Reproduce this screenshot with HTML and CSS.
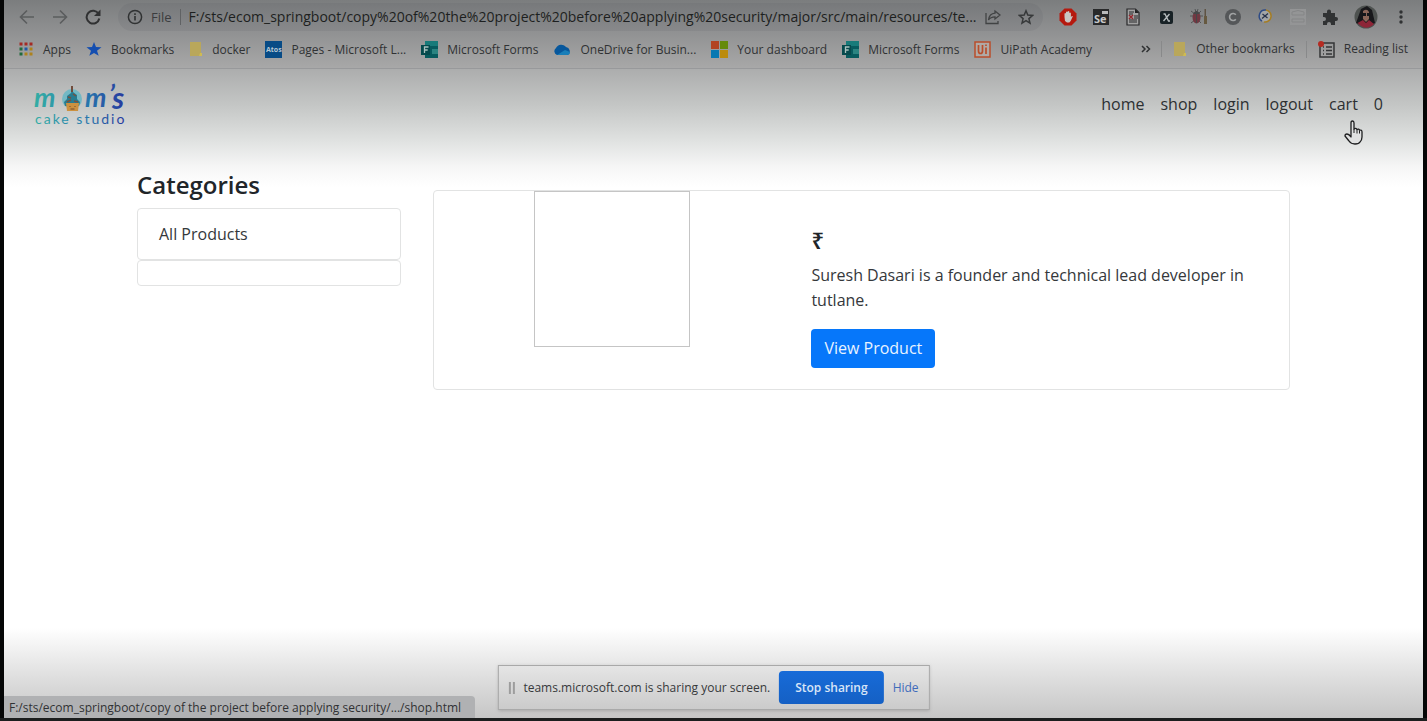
FILE: index.html
```
<!DOCTYPE html>
<html lang="en">
<head>
<meta charset="utf-8">
<title>Mom's Cake Studio - Shop</title>
<link rel="stylesheet" href="styles.css">
</head>
<body>
<div class="screen">
  <header class="browser">
    <div class="toolbar">
      <button class="tool" aria-label="Back"><svg width="16" height="16" viewBox="0 0 16 16" fill="none" stroke="#5b5d5e" stroke-width="1.600"><path d="M15 8H2M8 1.500 1.500 8 8 14.500"/></svg></button>
      <button class="tool" aria-label="Forward"><svg width="16" height="16" viewBox="0 0 16 16" fill="none" stroke="#5b5d5e" stroke-width="1.600"><path d="M1 8h13M8 1.500 14.500 8 8 14.500"/></svg></button>
      <button class="tool" aria-label="Reload"><svg width="16" height="16" viewBox="0 0 16 16"><path d="M13.600 5A6.400 6.400 0 1 0 14.300 9.500" fill="none" stroke="#303132" stroke-width="2"/><path d="M15.500.5V7H9z" fill="#303132"/></svg></button>
      <div class="address">
        <svg width="16" height="16" viewBox="0 0 16 16"><circle cx="8" cy="8" r="6.600" fill="none" stroke="#303233" stroke-width="1.500"/><path d="M8 7v4.500M8 4.200v1.700" stroke="#303233" stroke-width="1.600"/></svg>
        <span class="scheme">File</span>
        <span class="url">F:/sts/ecom_springboot/copy%20of%20the%20project%20before%20applying%20security/major/src/main/resources/te...</span>
        <button class="tool" aria-label="Share"><svg width="16" height="16" viewBox="0 0 16 16" fill="none" stroke="#414344" stroke-width="1.300"><path d="M1 4v10.500h12V12M10 2l5 4-5 4V7.800C7 7.800 5 8.500 3.500 11 4 7 6.500 4.500 10 4.200z"/></svg></button>
        <button class="tool star" aria-label="Bookmark this page"><svg width="16" height="16" viewBox="0 0 16 16" fill="none" stroke="#37393a" stroke-width="1.500"><path d="m8 1.800 1.800 4.300 4.700.4-3.600 3.100 1.100 4.600L8 11.700l-4 2.500 1.100-4.600-3.600-3.100 4.700-.4z"/></svg></button>
      </div>
      <div class="extensions">
        <button class="tool" aria-label="Ad blocker"><svg width="18" height="18" viewBox="0 0 18 18"><path d="M5.500.5h7l5 5v7l-5 5h-7l-5-5v-7z" fill="#b5190f"/><path d="M5.500 9V5.500q.8-1 1.500 0V4q.8-1 1.600 0v-.5q.9-1 1.700 0V5q1-1 1.600.2V9l1-1q1.400-.3.600 1l-1.800 4-1.400 1.500H8L6 13z" fill="#c9c5c3"/></svg></button>
        <button class="tool" aria-label="Selenium"><svg width="18" height="18" viewBox="0 0 18 18"><path d="M1 1h16v16H1z" fill="#28292a"/><path d="M10 3h6v3h-6z" fill="#b9babb"/><text x="2" y="15" class="se-text">Se</text></svg></button>
        <button class="tool" aria-label="Document"><svg width="18" height="18" viewBox="0 0 18 18"><path d="M3 1h8.500L15 4.500V17H3z" fill="#a2a2a2" stroke="#28292a" stroke-width="1.200"/><path d="M11 1v4h4z" fill="#202122"/><path d="M5 4h5M5 6h4M10 8h4M10 10h4M5 12h8M5 14h8" stroke="#28292a"/><path d="m5 7 4 4M9 7l-4 4" stroke="#96272d" stroke-width="1.400"/></svg></button>
        <button class="tool" aria-label="XPath"><svg width="18" height="18" viewBox="0 0 18 18"><rect x="3" y="3" width="13" height="13" rx="2" fill="#182226"/><path d="M6.500 6h1.500l3.500 7H13M12.500 6 6.500 13" fill="none" stroke="#b7bdbf" stroke-width="1.300"/></svg></button>
        <button class="tool" aria-label="Bug reporter"><svg width="20" height="18" viewBox="0 0 20 18"><path d="M2 3l4 3M1 8h4M2 15l4-3M12 3 9 6M14 8h-4M12 15l-3-3M6 1l1 3M9 1 8 4" stroke="#525455"/><ellipse cx="7.500" cy="9.500" rx="4" ry="6" fill="#713842"/><path d="M4 6q3.500-6 7 0z" fill="#454849"/><path d="M7.500 5v10" stroke="#454849"/><path d="M15.500 1h1.500v8h-1.500z" fill="#5e5344"/><path d="M15 8h3v8h-3z" fill="#665940"/></svg></button>
        <button class="tool" aria-label="Colour checker"><svg width="18" height="18" viewBox="0 0 18 18"><circle cx="9" cy="9" r="8" fill="#555759"/><path d="M11.800 6.800a3.500 3.500 0 1 0 0 4.400" fill="none" stroke="#a1a3a4" stroke-width="1.600"/></svg></button>
        <button class="tool" aria-label="Page tester"><svg width="18" height="18" viewBox="0 0 18 18"><circle cx="9" cy="8" r="6" fill="#a4a6a7"/><path d="M10 2a6 6 0 0 0-4 11" fill="none" stroke="#2e4b86" stroke-width="1.500"/><path d="M10 2a6 6 0 0 1-2 12" fill="none" stroke="#a67d22" stroke-width="1.500"/><path d="m6.500 6 5 4M12 5.500 6 10.500" stroke="#29334c" stroke-width="1.300"/></svg></button>
        <button class="tool" aria-label="Disabled extension"><svg width="18" height="18" viewBox="0 0 18 18"><path d="M1 1h16v16H1z" fill="#949596"/><path d="M3 4q6-3 12 0v3H3zM3 11h12v3H3z" fill="none" stroke="#858687"/></svg></button>
        <button class="tool" aria-label="Extensions"><svg width="18" height="18" viewBox="0 0 18 18"><path d="M2 5h4V3.500a2 2 0 0 1 4 0V5h4v4h1a2 2 0 0 1 0 4h-1v4h-4v-1a2 2 0 0 0-4 0v1H2v-4h1a2 2 0 0 0 0-4H2z" fill="#303233"/></svg></button>
        <button class="tool" aria-label="Profile"><svg width="24" height="24" viewBox="0 0 24 24"><circle cx="12" cy="12" r="11.500" fill="#4e5250"/><path d="M2 18 7 4l6-3 5 4 3 13-8 4z" fill="#18181b"/><path d="M9 6q4-3 6 1v7l-3 3-3-3z" fill="#8b6659"/><path d="M8 8h4v3H8zM13 8h3v3h-3z" fill="#15171b"/><path d="M3.500 18 9 15l3 3 3-3 5 4q-8 8-16.500-1z" fill="#8d2537"/></svg></button>
        <button class="tool" aria-label="Menu"><svg width="18" height="18" viewBox="0 0 18 18" fill="#303233"><circle cx="9" cy="4" r="1.700"/><circle cx="9" cy="9" r="1.700"/><circle cx="9" cy="14" r="1.700"/></svg></button>
      </div>
    </div>
    <nav class="bookmarks" aria-label="Bookmarks">
      <a href="#"><svg width="16" height="16" viewBox="0 0 16 16"><path d="M1.500 1.500h3v3h-3zM6.500 1.500h3v3h-3zM11.500 1.500h3v3h-3z" fill="#a42a24"/><path d="M1.500 6.500h3v3h-3zM1.500 11.500h3v3h-3z" fill="#206a3c"/><path d="M6.500 6.500h3v3h-3z" fill="#2159a4"/><path d="M6.500 11.500h3v3h-3zM11.500 6.500h3v3h-3zM11.500 11.500h3v3h-3z" fill="#ad821d"/></svg>Apps</a>
      <a href="#"><svg width="16" height="16" viewBox="0 0 16 16"><path d="m8 1 2 5 5.500.3L11 9.800l1.700 5L8 12l-4.700 2.800 1.700-5L.5 6.300 6 6z" fill="#144eb0"/></svg>Bookmarks</a>
      <a href="#"><svg width="14" height="16" viewBox="0 0 14 16"><path d="M1 1h11v11h1v3H1z" fill="#b9a75b"/><path d="M11 12h2v3h-3z" fill="#cfbb52"/></svg>docker</a>
      <a href="#"><svg width="17" height="17" viewBox="0 0 17 17"><path d="M0 0h17v17H0z" fill="#074b86"/><text x="1" y="11" class="atos-text">Atos</text></svg>Pages - Microsoft L...</a>
      <a href="#"><svg width="17" height="17" viewBox="0 0 17 17"><path d="M4 0h13v17H4z" fill="#075b5e"/><path d="M4 0h13v5H4z" fill="#187b7a"/><path d="M11 8h6v5h-6z" fill="#2a8481"/><path d="M0 4h9v10H0z" fill="#064a4d"/><path d="M3.500 12V6h4M3.500 9h3.200" fill="none" stroke="#a9c2bf" stroke-width="1.300"/></svg>Microsoft Forms</a>
      <a href="#"><svg width="18" height="17" viewBox="0 0 18 17"><path d="M4 14a4 4 0 0 1-1-7 6 6 0 0 1 10-1 4.500 4.500 0 0 1 2 8z" fill="#07579c"/><path d="m4 14 8-5 5 2q0 3-3 3z" fill="#187eb9"/></svg>OneDrive for Busin...</a>
      <a href="#"><svg width="17" height="17" viewBox="0 0 17 17"><path d="M0 0h8v8H0z" fill="#b24422"/><path d="M9 0h8v8H9z" fill="#658a0c"/><path d="M0 9h8v8H0z" fill="#0878b2"/><path d="M9 9h8v8H9z" fill="#bb8b0d"/></svg>Your dashboard</a>
      <a href="#"><svg width="17" height="17" viewBox="0 0 17 17"><path d="M4 0h13v17H4z" fill="#075b5e"/><path d="M4 0h13v5H4z" fill="#187b7a"/><path d="M11 8h6v5h-6z" fill="#2a8481"/><path d="M0 4h9v10H0z" fill="#064a4d"/><path d="M3.500 12V6h4M3.500 9h3.200" fill="none" stroke="#a9c2bf" stroke-width="1.300"/></svg>Microsoft Forms</a>
      <a href="#"><svg width="17" height="17" viewBox="0 0 17 17"><path d="M1 1h15v15H1z" fill="#b0aaa6" stroke="#b94e2b" stroke-width="1.500"/><path d="M4.500 4v6q0 2.500 2 2.500t2-2.500V4M12 6.500V13M12 3.500v1.600" fill="none" stroke="#b94e2b" stroke-width="1.700"/></svg>UiPath Academy</a>
      <button class="tool more" aria-label="More bookmarks"><svg width="10" height="10" viewBox="0 0 10 10" fill="none" stroke="#303233" stroke-width="1.500"><path d="m1 2 3 3-3 3M5.500 2l3 3-3 3"/></svg></button>
      <a href="#" class="divided"><svg width="14" height="16" viewBox="0 0 14 16"><path d="M1 1h11v11h1v3H1z" fill="#b9a75b"/><path d="M11 12h2v3h-3z" fill="#cfbb52"/></svg>Other bookmarks</a>
      <a href="#" class="divided reading"><svg width="17" height="17" viewBox="0 0 17 17"><path d="M2 2h14v14H2z" fill="none" stroke="#343637" stroke-width="1.500"/><path d="M5 6h1M8 6h6M5 9.500h1M8 9.500h6M5 13h1M8 13h6" stroke="#343637" stroke-width="1.300"/><circle cx="3" cy="3" r="3" fill="#b52b22"/></svg>Reading list</a>
    </nav>
  </header>

  <div class="page">
    <nav class="site-nav" aria-label="Main">
      <a href="#" class="brand" aria-label="Mom's cake studio">
        <svg width="104" height="56" viewBox="0 0 104 56">
          <defs>
            <linearGradient id="ink" gradientUnits="userSpaceOnUse" x1="2" y1="0" x2="94" y2="0"><stop offset="0" stop-color="#33aca4"/><stop offset=".5" stop-color="#287fae"/><stop offset="1" stop-color="#26349e"/></linearGradient>
          </defs>
          <circle cx="38" cy="23" r="10" fill="#73b8c4"/>
          <path d="m38 12-1 5-4 3v3l-3 3 1 4h14l1-4-3-3v-4l-4-3z" fill="#267c91"/>
          <path d="M37 10h2v6h-2z" fill="#704c3c"/>
          <path d="m34 21 3 1M39 18l3 2M33 26l4-2M40 25l4 1" stroke="#78513f" stroke-width="1.500"/>
          <path d="M32 27h13l-1 8H33z" fill="#cc913f"/>
          <path d="M36 30v1M41 30v1M36.500 33h4" stroke="#71482f"/>
          <text x="0" y="31" class="logo-script">m</text>
          <text x="51" y="31" class="logo-script">m</text>
          <text x="75" y="28" class="logo-script">’</text>
          <text x="78" y="33" class="logo-script logo-s">s</text>
          <text x="1" y="48" class="logo-sub">cake studio</text>
        </svg>
      </a>
      <div class="links">
        <a href="#">home</a><a href="#">shop</a><a href="#">login</a><a href="#">logout</a><a href="#">cart</a><a href="#">0</a>
      </div>
      <svg class="cursor" width="20" height="26" viewBox="0 0 20 26"><path d="M7 15V3q0-2 1.500-2T10 3v6q2-1.500 3 .5 2-1 2.500.7 2.500-.7 2.500 1.800v5q0 3-2 5-1 2-5 2t-6-3l-4-5q0-2 2-2 2 0 4 3z" fill="#e0e1e1" stroke="#1d1e1f" stroke-width="1.300" stroke-linejoin="round"/><path d="M10 9v4M13 9.500v4M15.500 10.500v3" stroke="#1d1e1f"/></svg>
    </nav>

    <main class="shop">
      <aside class="categories">
        <h2>Categories</h2>
        <ul>
          <li><a href="#">All Products</a></li>
          <li></li>
        </ul>
      </aside>
      <article class="product">
        <div class="photo"></div>
        <div class="details">
          <h3>₹</h3>
          <p>Suresh Dasari is a founder and technical lead developer in tutlane.</p>
          <a href="#" class="view">View Product</a>
        </div>
      </article>
    </main>
  </div>

  <div class="status">F:/sts/ecom_springboot/copy of the project before applying security/.../shop.html</div>
  <div class="sharing" role="status">
    <span class="grip"></span>
    <span>teams.microsoft.com is sharing your screen.</span>
    <button class="stop">Stop sharing</button>
    <button class="hide">Hide</button>
  </div>
</div>
</body>
</html>
```
FILE: styles.css
```
* { box-sizing: border-box; }

body {
  margin: 0;
  background: #050606;
  color: #212529;
  font-family: "Open Sans", "Noto Sans", sans-serif;
}

a { color: inherit; text-decoration: none; }
svg { display: block; flex: none; }

.screen {
  position: relative;
  display: flex;
  flex-direction: column;
  min-height: 100vh;
  padding: 0 4px;
  border-bottom: 3px solid #1c1e1e;
}

/* Browser chrome */
.browser {
  background: linear-gradient(#7b7d7e, #909192 32px, #a8a8a8 68px);
  border-bottom: 1px solid #98999b;
}

.toolbar {
  display: flex;
  align-items: center;
  height: 33px;
  padding: 0 13px 0 15px;
}

.tool {
  display: block;
  flex: none;
  padding: 0;
  border: 0;
  background: none;
}

.toolbar > .tool { margin-right: 17px; }

.address {
  display: flex;
  flex: 1;
  align-items: center;
  gap: 8px;
  min-width: 0;
  height: 28px;
  padding: 0 9px;
  border-radius: 14px;
  background: linear-gradient(#77797b, #88898b);
  font-size: 14px;
}

.scheme {
  padding-right: 8px;
  border-right: 1px solid #606264;
  color: #3b3d3f;
  font-size: 13px;
  line-height: 16px;
}

.url {
  flex: 1;
  min-width: 0;
  color: #1d1f20;
  white-space: nowrap;
}

.address .star { margin-left: 9px; }

.extensions {
  display: flex;
  align-items: center;
  justify-content: space-between;
  width: 351px;
  margin-left: 16px;
}

.bookmarks {
  display: flex;
  align-items: center;
  gap: 15px;
  height: 35px;
  padding: 0 15px 3px 14px;
  color: #303234;
  font-size: 12px;
  white-space: nowrap;
}

.bookmarks a {
  display: flex;
  align-items: center;
  gap: 9px;
}

.bookmarks .more { margin-left: auto; margin-right: -5px; }

.bookmarks .divided {
  padding-left: 11px;
  border-left: 1px solid #88898a;
  line-height: 16px;
}

.bookmarks .reading { margin-left: -4px; }

/* Shop page */
.page {
  flex: 1;
  background:
    linear-gradient(#acadad, #c4c6c5 36px, #e0e2e1 72px, #f6f6f6 98px, #fff 118px, transparent 118px),
    linear-gradient(to top, #c6c6c6, #dedede 40px, #fff 90px);
}

.site-nav {
  position: relative;
  display: flex;
  align-items: center;
  justify-content: space-between;
  height: 70px;
  padding: 0 40px 0 30px;
}

.links {
  display: flex;
  gap: 16px;
  color: #2d3032;
  font-size: 16px;
}

.cursor {
  position: absolute;
  top: 51px;
  right: 59px;
}

.logo-script {
  fill: url(#ink);
  font: italic 700 27px Lato, sans-serif;
}

.logo-s { font-size: 30px; }

.logo-sub {
  fill: url(#ink);
  font: 14px Lato, sans-serif;
  letter-spacing: 2px;
}

.se-text { fill: #c7c8c8; font: bold 11px "Open Sans", sans-serif; }
.atos-text { fill: #b5c8d4; font: bold 7px "Open Sans", sans-serif; }

.shop {
  display: grid;
  grid-template-columns: 1fr 3fr;
  max-width: 1185px;
  margin: 0 auto;
  padding: 30px 0;
}

.categories { padding: 0 16px; }

.categories h2 {
  margin: 0 0 8px;
  font-size: 24px;
  font-weight: 600;
  line-height: 31px;
}

.categories ul {
  margin: 0;
  padding: 0;
  list-style: none;
}

.categories li {
  min-height: 26px;
  border: 1px solid #e2e3e3;
  border-radius: 4px;
  color: #35383b;
  font-size: 16px;
  line-height: 26px;
}

.categories li a {
  display: block;
  padding: 12px 21px;
}

.product {
  display: grid;
  grid-template-columns: 5fr 7fr;
  align-self: start;
  margin: 21px 16px 0;
  border: 1px solid #e2e3e3;
  border-radius: 4px;
}

.photo {
  justify-self: center;
  width: 156px;
  height: 156px;
  border: 1px solid #c5c5c5;
}

.details { padding: 36px 21px 21px; }

.details h3 {
  margin: 0 0 10px;
  font-size: 22px;
  font-weight: 600;
  line-height: 26px;
}

.details p {
  margin: 0 0 16px;
  color: #35383b;
  font-size: 16px;
  line-height: 25px;
}

.view {
  display: inline-block;
  padding: 7px 13px;
  border-radius: 4px;
  background: #0677fa;
  color: #e9f3ff;
  font-size: 16px;
  line-height: 25px;
  vertical-align: top;
}

/* Overlays along the bottom edge */
.status {
  position: absolute;
  bottom: 0;
  left: 4px;
  padding: 1px 14px 0 5px;
  border-radius: 0 4px 0 0;
  background: #b0b1b3;
  color: #303234;
  font-size: 12px;
  line-height: 21px;
}

.sharing {
  position: absolute;
  bottom: 8px;
  left: 50%;
  display: flex;
  align-items: center;
  gap: 9px;
  height: 45px;
  padding: 0 10px;
  border: 1px solid #a9a9a9;
  background: linear-gradient(#e5e5e5, #cbcbcb);
  box-shadow: 0 1px 3px #8888;
  color: #37393b;
  font-size: 12px;
  white-space: nowrap;
  transform: translateX(-50%);
}

.grip {
  width: 6px;
  height: 12px;
  border: solid #9d9d9d;
  border-width: 0 2px;
}

.stop {
  height: 33px;
  padding: 0 16px;
  border: 0;
  border-radius: 4px;
  background: linear-gradient(#176bd8, #1560c4);
  color: #d8e5f7;
  font: 600 12px "Open Sans", sans-serif;
}

.hide {
  padding: 0;
  border: 0;
  background: none;
  color: #3f6cbb;
  font: 12px "Open Sans", sans-serif;
}
```
